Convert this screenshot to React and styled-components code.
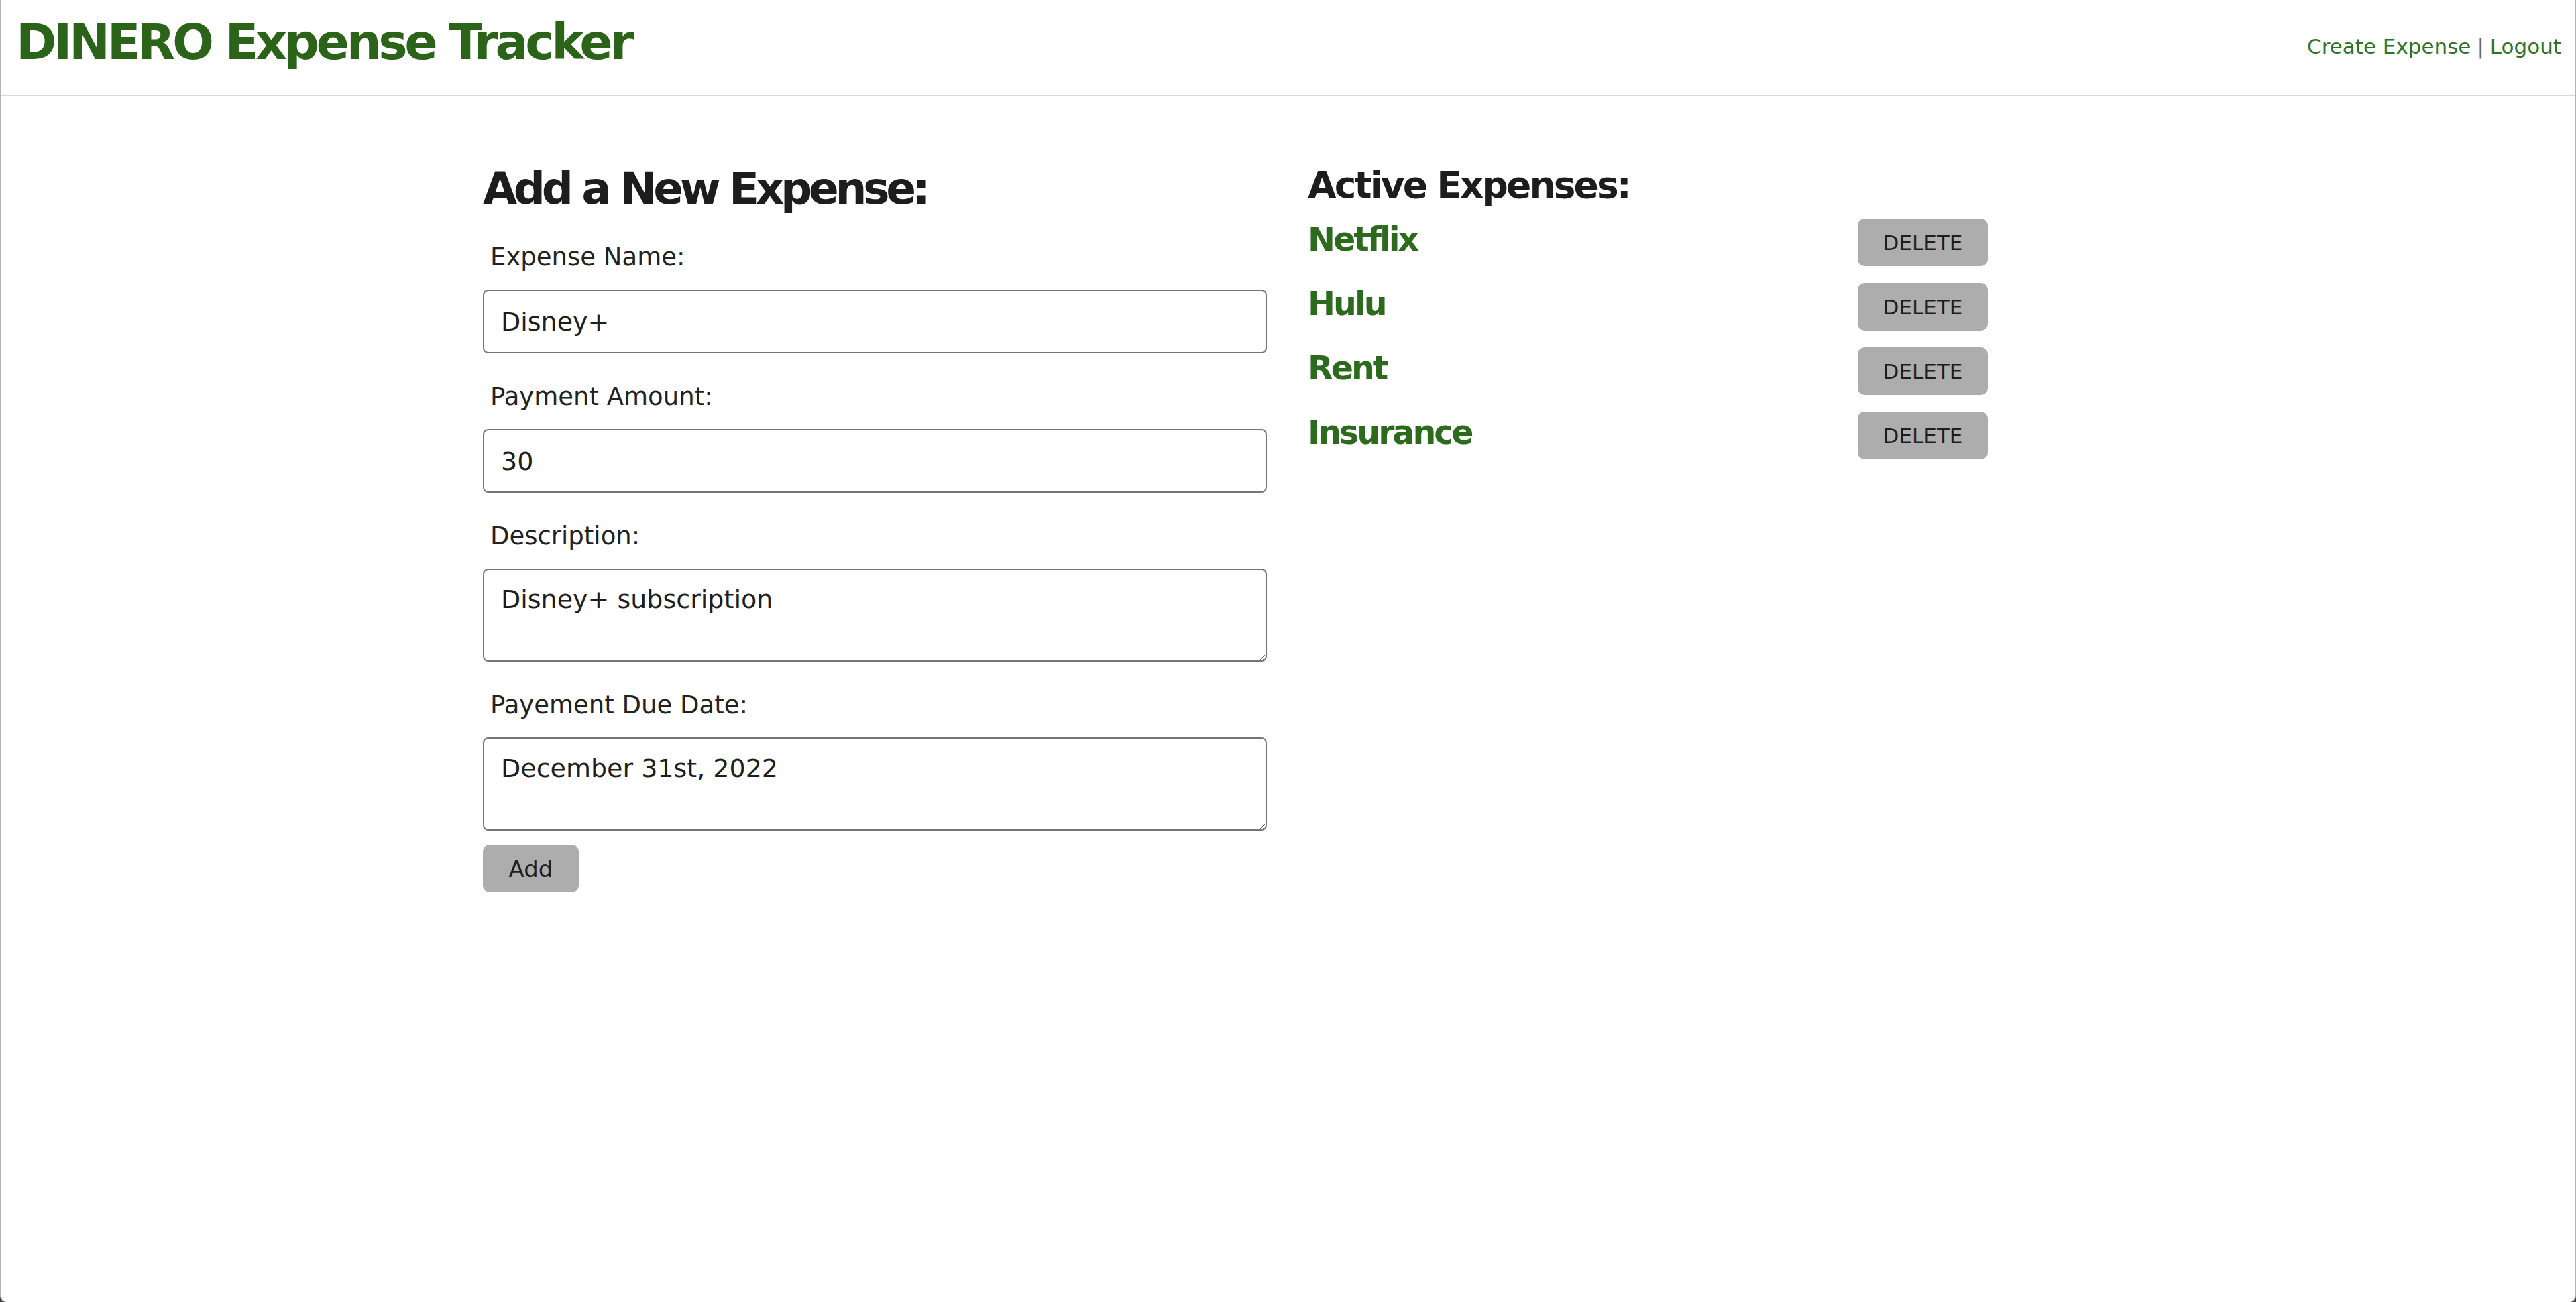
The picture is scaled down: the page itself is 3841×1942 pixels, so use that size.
import React from "react";
import styled, { createGlobalStyle } from "styled-components";

const GlobalStyle = createGlobalStyle`
  html, body {
    margin: 0;
    padding: 0;
    background: #3c3c3c;
  }
  body {
    font-family: "DejaVu Sans", "Liberation Sans", sans-serif;
    color: #1e1e1e;
  }
  * { box-sizing: border-box; }
`;

const Frame = styled.div`
  min-height: 100vh;
  border-left: 2px solid #b4b4b4;
  border-right: 2px solid #b4b4b4;
  border-bottom-left-radius: 9px;
  border-bottom-right-radius: 9px;
  background: #fff;
`;

const Header = styled.header`
  height: 143px;
  display: flex;
  justify-content: space-between;
  align-items: flex-start;
  padding: 0 20px 0 22px;
  border-bottom: 2px solid #d9d9d9;
`;

const Brand = styled.h1`
  margin: 26px 0 0;
  font-size: 73px;
  line-height: 1;
  font-weight: 700;
  letter-spacing: -4.4px;
  color: #2b6418;
`;

const Nav = styled.nav`
  margin-top: 54px;
  font-size: 31px;
  line-height: 1;
  color: #2e7428;
  display: flex;
  gap: 9px;
`;

const NavLink = styled.a`
  color: #2e7428;
  text-decoration: none;
`;

const Divider = styled.span`
  color: #6a6a6a;
`;

const Main = styled.main`
  display: grid;
  grid-template-columns: 1169px 1171px;
  column-gap: 61px;
  justify-content: center;
  padding-top: 104px;
`;

const FormColumn = styled.form`
  display: flex;
  flex-direction: column;
  align-items: flex-start;
`;

const FormTitle = styled.h2`
  margin: 2px 0 50px;
  font-size: 66px;
  line-height: 1;
  font-weight: 700;
  letter-spacing: -5.3px;
  color: #1d1d1d;
`;

const Label = styled.label`
  display: block;
  margin: ${(p) => (p.$first ? "0" : "46px")} 0 30px 11px;
  font-size: 37px;
  line-height: 1;
  color: #222;
`;

const TextInput = styled.input`
  width: 100%;
  height: 95px;
  padding: 0 25px;
  border: 2px solid #767676;
  border-radius: 8px;
  font-family: inherit;
  font-size: 38px;
  color: #1e1e1e;
  background: #fff;
  outline: none;
`;

const TextArea = styled.textarea`
  width: 100%;
  height: 139px;
  padding: 22px 25px;
  border: 2px solid #767676;
  border-radius: 8px;
  font-family: inherit;
  font-size: 38px;
  line-height: 1.2;
  color: #1e1e1e;
  background: #fff;
  resize: vertical;
  outline: none;
`;

const GrayButton = styled.button`
  width: ${(p) => p.$width}px;
  height: 71px;
  padding: 0;
  border: none;
  border-radius: 10px;
  background: #adadad;
  font-family: inherit;
  font-size: ${(p) => p.$size}px;
  color: #1e1e1e;
  cursor: pointer;
`;

const AddButton = styled(GrayButton)`
  margin-top: 21px;
`;

const ListColumn = styled.section`
  display: flex;
  flex-direction: column;
`;

const ListTitle = styled.h2`
  margin: 2px 0 22px;
  font-size: 55px;
  line-height: 1;
  font-weight: 700;
  letter-spacing: -2.9px;
  color: #1d1d1d;
`;

const List = styled.ul`
  list-style: none;
  margin: 0;
  padding: 0;
  display: flex;
  flex-direction: column;
  gap: 25px;
`;

const Row = styled.li`
  display: grid;
  grid-template-columns: 820px 194px;
  align-items: start;
  height: 71px;
`;

const ExpenseName = styled.span`
  padding-top: 7px;
  font-size: 49px;
  line-height: 1;
  font-weight: 700;
  letter-spacing: -3px;
  color: #2c6a1d;
`;

const expenses = ["Netflix", "Hulu", "Rent", "Insurance"];

export default function App() {
  return (
    <>
      <GlobalStyle />
      <Frame>
        <Header>
          <Brand>DINERO Expense Tracker</Brand>
          <Nav>
            <NavLink href="#">Create Expense</NavLink>
            <Divider>|</Divider>
            <NavLink href="#">Logout</NavLink>
          </Nav>
        </Header>
        <Main>
          <FormColumn onSubmit={(e) => e.preventDefault()}>
            <FormTitle>Add a New Expense:</FormTitle>
            <Label $first htmlFor="name">Expense Name:</Label>
            <TextInput id="name" defaultValue="Disney+" />
            <Label htmlFor="amount">Payment Amount:</Label>
            <TextInput id="amount" defaultValue="30" />
            <Label htmlFor="desc">Description:</Label>
            <TextArea id="desc" defaultValue="Disney+ subscription" />
            <Label htmlFor="due">Payement Due Date:</Label>
            <TextArea id="due" defaultValue="December 31st, 2022" />
            <AddButton type="submit" $width={143} $size={34}>Add</AddButton>
          </FormColumn>
          <ListColumn>
            <ListTitle>Active Expenses:</ListTitle>
            <List>
              {expenses.map((name) => (
                <Row key={name}>
                  <ExpenseName>{name}</ExpenseName>
                  <GrayButton type="button" $width={194} $size={31}>DELETE</GrayButton>
                </Row>
              ))}
            </List>
          </ListColumn>
        </Main>
      </Frame>
    </>
  );
}
